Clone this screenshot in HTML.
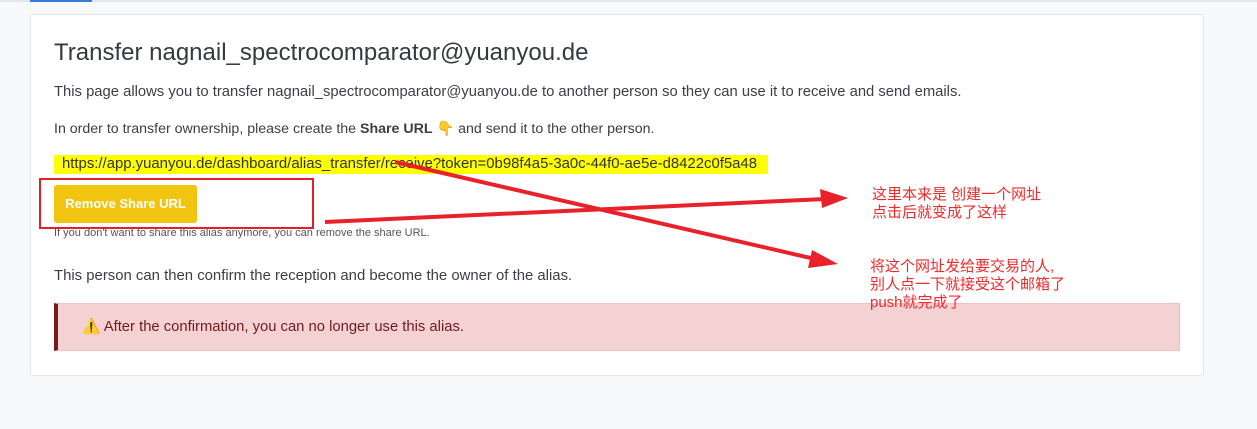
<!DOCTYPE html>
<html><head><meta charset="utf-8"><style>
body{margin:0;width:1257px;height:429px;background:#f8f9fb;font-family:"Liberation Sans","Noto Sans CJK SC",sans-serif;position:relative;overflow:hidden;color:#3b3f45}
.top{position:absolute;left:0;top:0;width:1257px;height:2px;background:#e3e6ea}
.tab{position:absolute;left:30px;top:0;width:62px;height:2px;background:#3a7bd5}
.card{position:absolute;left:30px;top:14px;width:1174px;height:362px;background:#fff;border:1px solid #e3e6ea;border-radius:3px;box-sizing:border-box}
.a{position:absolute;white-space:nowrap}
h1{position:absolute;left:54px;top:39px;margin:0;font-size:24px;font-weight:500;color:#343a40;white-space:nowrap}
.url{position:absolute;left:54px;top:155px;width:714px;height:19px;background:#ffff00;font-size:14.9px;line-height:19px;padding-left:8px;box-sizing:border-box;color:#333;white-space:nowrap}
.btn{position:absolute;left:54px;top:185px;width:143px;height:38px;background:#f1c40f;border-radius:3px;color:#fff;font-weight:bold;font-size:13px;line-height:38px;text-align:center}
.rbox{position:absolute;left:39px;top:178px;width:275px;height:51px;border:2px solid #e0202a;box-sizing:border-box}
.alert{position:absolute;left:54px;top:303px;width:1126px;height:48px;background:#f4d1d2;border:1px solid #f0c0c2;border-left:4px solid #761b1b;box-sizing:border-box;color:#6e1c1c;font-size:14.8px;line-height:46px;padding-left:24px;white-space:nowrap}
.cn{position:absolute;color:#ee2a2a;font-size:15px;line-height:18px;white-space:nowrap}
</style></head><body>
<div class="top"></div><div class="tab"></div>
<div class="card"></div>
<h1>Transfer nagnail_spectrocomparator@yuanyou.de</h1>
<div class="a" style="left:54px;top:84px;font-size:14.8px">This page allows you to transfer nagnail_spectrocomparator@yuanyou.de to another person so they can use it to receive and send emails.</div>
<div class="a" style="left:54px;top:121px;font-size:14.2px">In order to transfer ownership, please create the <b>Share URL</b> 👇 and send it to the other person.</div>
<div class="url">https://app.yuanyou.de/dashboard/alias_transfer/receive?token=0b98f4a5-3a0c-44f0-ae5e-d8422c0f5a48</div>
<div class="btn">Remove Share URL</div>
<div class="rbox"></div>
<div class="a" style="left:54px;top:227px;font-size:11px;color:#555">If you don't want to share this alias anymore, you can remove the share URL.</div>
<div class="a" style="left:54px;top:268px;font-size:14.9px">This person can then confirm the reception and become the owner of the alias.</div>
<div class="alert">⚠️ After the confirmation, you can no longer use this alias.</div>
<svg class="a" style="left:0;top:0" width="1257" height="429">
<line x1="325" y1="222" x2="825" y2="199" stroke="#e8212b" stroke-width="4"/>
<polygon points="848,198 820,189 822,208" fill="#e8212b"/>
<line x1="395" y1="162" x2="815" y2="259" stroke="#e8212b" stroke-width="4"/>
<polygon points="838,264 812,250 808,268" fill="#e8212b"/>
</svg>
<div class="cn" style="left:872px;top:186px">这里本来是 创建一个网址<br>点击后就变成了这样</div>
<div class="cn" style="left:870px;top:258px">将这个网址发给要交易的人,<br>别人点一下就接受这个邮箱了<br>push就完成了</div>
</body></html>
